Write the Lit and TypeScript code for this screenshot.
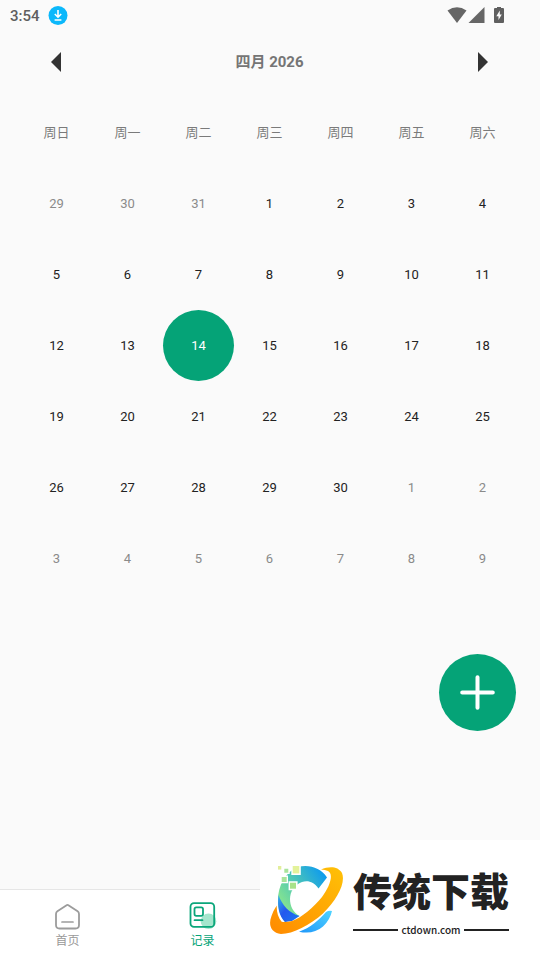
import { LitElement, html, css, svg } from "lit";
import { customElement, state } from "lit/decorators.js";
import { classMap } from "lit/directives/class-map.js";

interface Day {
  label: number;
  index: number;
  outside: boolean;
}

const WEEKDAYS = ["周日", "周一", "周二", "周三", "周四", "周五", "周六"];
const MONTHS = ["一月", "二月", "三月", "四月", "五月", "六月", "七月", "八月", "九月", "十月", "十一月", "十二月"];

function buildWeeks(year: number, month: number): Day[][] {
  const lead = new Date(year, month, 1).getDay();
  return Array.from({ length: 6 }, (_, w) =>
    Array.from({ length: 7 }, (_, d) => {
      const index = w * 7 + d - lead + 1;
      const date = new Date(year, month, index);
      return { label: date.getDate(), index, outside: date.getMonth() !== month };
    })
  );
}

@customElement("status-bar")
export class StatusBar extends LitElement {
  static styles = css`
    :host {
      display: flex;
      align-items: center;
      height: 32px;
      padding: 0 35px 0 10px;
      color: #5f5f5f;
      font: 500 15px/20px Roboto, sans-serif;
    }
    .time { margin-right: 8px; }
    .spacer { flex: 1; }
    svg { display: block; margin-bottom: 2px; }
    .signal { margin-left: 1px; margin-right: 8px; }
  `;
  render() {
    return html`
      <span class="time">3:54</span>
      <svg width="20" height="20" viewBox="0 0 20 20">
        <circle cx="10" cy="10.500" r="9.500" fill="#0bb8fb" />
        <path d="M10 5v7M6.800 9l3.200 3.200 3.200-3.200M6.600 15h6.800" fill="none" stroke="#fff" stroke-width="1.600" />
      </svg>
      <span class="spacer"></span>
      <svg width="20" height="16" viewBox="0 0 20 16">
        <path d="M.5 3.6Q10-3 19.500 3.600L10 16z" fill="#666" />
      </svg>
      <svg class="signal" width="17" height="16" viewBox="0 0 17 16">
        <path d="M.5 16L16.500 0V16z" fill="#666" />
      </svg>
      <svg width="12" height="16" viewBox="0 0 12 16">
        <path d="M4 0h4v1h2q1 0 1 1v13q0 1-1 1H2q-1 0-1-1V2q0-1 1-1h2z" fill="#5f5f5f" />
        <path d="M6.800 3.500L3.300 9.300h2.200V13L8.800 7.600H6.800z" fill="#fafafa" />
      </svg>
    `;
  }
}

@customElement("month-calendar")
export class MonthCalendar extends LitElement {
  static styles = css`
    :host { display: block; padding: 0 22px 0 21px; }
    .head {
      display: grid;
      grid-template-columns: 1fr 2fr 1fr;
      align-items: center;
      height: 60px;
      margin: 0 20px;
    }
    .title {
      margin: 0;
      text-align: center;
      color: #757575;
      font: 700 15px/20px Roboto, "Noto Sans CJK SC", sans-serif;
    }
    button {
      border: 0;
      padding: 0;
      background: none;
      color: inherit;
      font: inherit;
    }
    .arrow { width: 30px; height: 30px; display: grid; place-items: center; }
    .next { justify-self: end; }
    table {
      width: 100%;
      margin-top: 5px;
      table-layout: fixed;
      border-collapse: collapse;
      text-align: center;
      font: 400 13px/18px Roboto, "Noto Sans CJK SC", sans-serif;
    }
    th, td { height: 71px; padding: 0; }
    th { color: #7a7a7a; font-weight: 400; }
    .day { width: 71px; height: 71px; border-radius: 50%; color: #222; }
    .outside { color: #8a8a8a; }
    .selected { background: #05a377; color: #fff; }
  `;

  @state() private year = 2026;
  @state() private month = 3;
  @state() private selected = 14;

  private shift(step: number) {
    const d = new Date(this.year, this.month + step, 1);
    this.year = d.getFullYear();
    this.month = d.getMonth();
  }

  render() {
    return html`
      <div class="head">
        <button class="arrow" @click=${() => this.shift(-1)}>
          <svg width="10" height="20" viewBox="0 0 10 20"><path d="M10 0v20L0 10z" fill="#333" /></svg>
        </button>
        <h1 class="title">${MONTHS[this.month]} ${this.year}</h1>
        <button class="arrow next" @click=${() => this.shift(1)}>
          <svg width="10" height="20" viewBox="0 0 10 20"><path d="M0 0v20l10-10z" fill="#333" /></svg>
        </button>
      </div>
      <table>
        <thead>
          <tr>${WEEKDAYS.map((d) => html`<th scope="col">${d}</th>`)}</tr>
        </thead>
        <tbody>
          ${buildWeeks(this.year, this.month).map(
            (week) => html`<tr>
              ${week.map(
                (d) => html`<td>
                  <button
                    class=${classMap({ day: true, outside: d.outside, selected: d.index === this.selected })}
                    @click=${() => (this.selected = d.index)}
                  >${d.label}</button>
                </td>`
              )}
            </tr>`
          )}
        </tbody>
      </table>
    `;
  }
}

const homeIcon = svg`
  <path d="M12.200 2.400Q13.500 1.500 14.800 2.400L23.600 8.300Q25 9.300 25 11V22Q25 25.500 21.500 25.500H5.500Q2 25.500 2 22V11Q2 9.300 3.400 8.300Z" fill="none" stroke="#9c9c9c" stroke-width="1.800" />
  <path d="M8 19h11" stroke="#9c9c9c" stroke-width="1.700" stroke-linecap="round" />
`;

const recordIcon = svg`
  <circle cx="19.500" cy="19.200" r="7.800" fill="#a5e6cd" />
  <rect x="1.500" y="1.200" width="23.700" height="23.700" rx="3.500" fill="none" stroke="#0ba67b" stroke-width="1.800" />
  <rect x="5.500" y="5.300" width="8.500" height="8.500" rx="1.800" fill="none" stroke="#0ba67b" stroke-width="1.800" />
  <path d="M5.500 18.200h8" stroke="#0ba67b" stroke-width="1.700" stroke-linecap="round" />
`;

@customElement("tab-bar")
export class TabBar extends LitElement {
  static styles = css`
    :host {
      display: grid;
      grid-template-columns: repeat(4, 1fr);
      height: 70px;
      background: #fff;
      border-top: 1px solid #e6e6e6;
    }
    .tab {
      display: flex;
      flex-direction: column;
      align-items: center;
      padding-top: 12px;
      color: #999;
      text-decoration: none;
      font: 400 12px/20px "Noto Sans CJK SC", sans-serif;
    }
    .active { color: #05a377; }
    svg { display: block; overflow: visible; }
  `;
  render() {
    return html`
      <a class="tab" href="#home"><svg width="27" height="28" viewBox="0 -1 27 28">${homeIcon}</svg>首页</a>
      <a class="tab active" href="#records"><svg width="27" height="28" viewBox="0 0 27 28">${recordIcon}</svg>记录</a>
    `;
  }
}

@customElement("site-badge")
export class SiteBadge extends LitElement {
  static styles = css`
    :host {
      display: flex;
      align-items: center;
      box-sizing: border-box;
      width: 280px;
      height: 120px;
      padding-left: 8px;
      background: #fff;
      color: #222;
    }
    .logo { flex: none; display: block; }
    .words { width: 156px; margin-left: 9px; padding-top: 4px; }
    .name {
      white-space: nowrap;
      font: 900 39px/44px "Noto Sans CJK SC", sans-serif;
    }
    .site {
      display: flex;
      align-items: center;
      gap: 3px;
      margin-top: 12px;
      font: 500 10px/14px "Noto Sans CJK SC", sans-serif;
    }
    .rule { flex: 1; height: 2px; background: #222; }
  `;
  render() {
    return html`
      <svg class="logo" width="76" height="76" viewBox="0 0 76 76">
        <defs>
          <linearGradient id="arc" gradientUnits="userSpaceOnUse" x1="12" y1="44" x2="58" y2="14">
            <stop offset="0" stop-color="#8ce78b" />
            <stop offset=".45" stop-color="#4fc8b4" />
            <stop offset="1" stop-color="#0e9bee" />
          </linearGradient>
          <linearGradient id="deep" x1="0" y1="0" x2="1" y2="1">
            <stop offset="0" stop-color="#35b5e8" />
            <stop offset=".45" stop-color="#2458ee" />
            <stop offset="1" stop-color="#1a78f2" />
          </linearGradient>
          <linearGradient id="tail" x1="0" y1="1" x2="1" y2="0">
            <stop offset="0" stop-color="#1f97fa" />
            <stop offset="1" stop-color="#50d4ff" />
          </linearGradient>
          <linearGradient id="ring" x1="0" y1="1" x2="1" y2="0">
            <stop offset="0" stop-color="#ff8a00" />
            <stop offset="1" stop-color="#ffc107" />
          </linearGradient>
        </defs>
        <path d="M30 5C41 2 53 6 59 15.500L50.500 26.500C46 20 40 18 34 20C26 23 22 30 22 37C22 44 25 50 31.500 54L17 60C12 54 10 47 10 38C10 24 17 10 30 5Z" fill="url(#arc)" />
        <path d="M10.500 33C14 43 21 51 31.500 54L24 59L17 60C11 54 9 44 10.500 33Z" fill="url(#deep)" />
        <path d="M31 69.700C42 66 51 58 58 50Q61 48 64 49Q62 58 55 64.500Q45 73 31 69.700Z" fill="url(#tail)" />
        <path d="M53 7.500C61 4 70 4 74 11C78 21 69 38 55 51.500C42 63 25 72 13 72C3 71 0 63 3.500 54Q5 49 8.700 43.500Q8.500 54 13.700 59.700Q18 60.500 24 59C33 56 46 45 54 35C62 24 66 12 60 9Q57 7.500 53 7.500Z" fill="url(#ring)" />
        <path d="M23.300 2.500h9.500v10.400h-9.500zM15 5.300h6.700v6.700h-6.700zM12.300 13.600h7.700v7.700h-7.700zM20.600 19.300h9v9h-9z" fill="#fff" />
        <path d="M24.700 4h6.600v7.400h-6.600z" fill="#e3f29a" />
        <path d="M16.300 6.700h4v4h-4zM13.700 15h5v5h-5z" fill="#a9e49b" />
        <path d="M10 4h3.300v3.600H10z" fill="#e2ee9a" />
        <path d="M22 20.700h6v6h-6z" fill="#a8e28a" />
      </svg>
      <div class="words">
        <div class="name">传统下载</div>
        <div class="site"><span class="rule"></span>ctdown.com<span class="rule"></span></div>
      </div>
    `;
  }
}

@customElement("app-root")
export class AppRoot extends LitElement {
  static styles = css`
    :host {
      display: flex;
      flex-direction: column;
      position: relative;
      min-height: 100vh;
      background: #fafafa;
    }
    main { flex: 1; position: relative; }
    .add {
      position: absolute;
      right: 24px;
      bottom: 158px;
      display: grid;
      place-items: center;
      width: 77px;
      height: 77px;
      padding: 0;
      border: 0;
      border-radius: 50%;
      background: #05a377;
    }
    .badge { position: absolute; right: 0; bottom: 0; }
  `;
  render() {
    return html`
      <status-bar></status-bar>
      <main>
        <month-calendar></month-calendar>
        <button class="add">
          <svg width="35" height="35" viewBox="0 0 35 35">
            <path d="M17.500 2.200v30.600M2.200 17.500h30.600" stroke="#fff" stroke-width="4" stroke-linecap="round" />
          </svg>
        </button>
      </main>
      <tab-bar></tab-bar>
      <site-badge class="badge"></site-badge>
    `;
  }
}
